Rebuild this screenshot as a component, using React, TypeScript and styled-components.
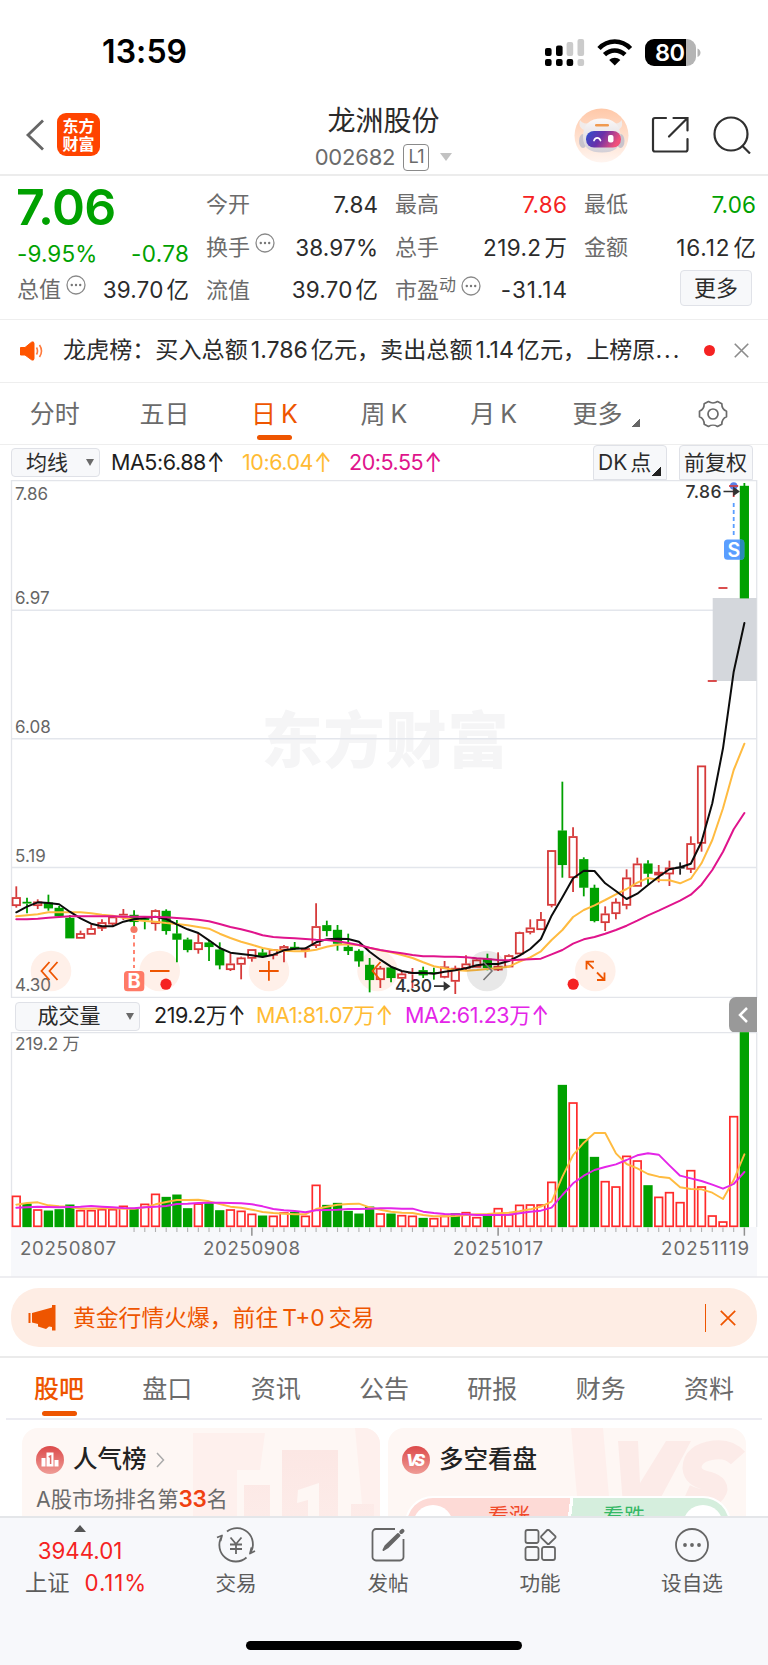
import React from 'react';
import styled, { createGlobalStyle } from 'styled-components';

const GlobalStyle = createGlobalStyle`
  * { box-sizing: border-box; }
  body {
    margin: 0;
    background: #fff;
    color: #2b2b2b;
    font-family: Inter, "Noto Sans CJK SC", sans-serif;
    line-height: 1.2;
    -webkit-font-smoothing: antialiased;
  }
`;

const ORANGE = '#ee5500';
const GREEN = '#00a100';
const RED = '#f52222';
const GREY = '#6b6b6b';

const Screen = styled.main`
  width: 768px;
  height: 1665px;
  display: flex;
  flex-direction: column;
  overflow: hidden;
  background: #fff;
`;

/* ---------- status bar ---------- */
const StatusBar = styled.div`
  height: 95px;
  padding: 10px 67px 0 102px;
  display: flex;
  align-items: center;
  justify-content: space-between;
`;
const Clock = styled.span`
  font-size: 32px;
  font-weight: 600;
  letter-spacing: 0.1px;
  color: #000;
`;
const StatusIcons = styled.svg`
  width: 156px;
  height: 28px;
  display: block;
`;

/* ---------- header ---------- */
const Header = styled.header`
  height: 81px;
  padding: 1px 17px 0 25px;
  display: grid;
  grid-template-columns: 220px 1fr 180px;
  border-bottom: 2px solid #ececec;
`;
const HeaderLeft = styled.div`
  display: flex;
  align-items: center;
  gap: 12px;
  padding-bottom: 1px;
`;
const Logo = styled.div`
  width: 43px;
  height: 43px;
  border-radius: 9px;
  background: #ff4400;
  color: #fff;
  font: 700 16px/18px "Noto Sans CJK SC", sans-serif;
  display: flex;
  align-items: center;
  justify-content: center;
  text-align: center;
  padding-bottom: 1px;
`;
const HeaderTitle = styled.div`
  display: flex;
  flex-direction: column;
  align-items: center;
  padding-top: 8px;
  margin-left: -49px;
`;
const StockName = styled.h1`
  margin: 0;
  font-size: 28px;
  line-height: 34px;
  font-weight: 400;
`;
const StockCode = styled.div`
  display: flex;
  align-items: center;
  gap: 8px;
  height: 28px;
  margin-top: 5px;
  font-size: 22px;
  color: ${GREY};
  letter-spacing: -0.2px;
`;
const Level = styled.span`
  width: 26px;
  height: 27px;
  border: 1.5px solid #8a8a8a;
  border-radius: 4px;
  font-size: 18px;
  line-height: 24px;
  text-align: center;
  letter-spacing: -0.5px;
`;
const Caret = styled.span`
  margin-left: 3px;
  border: 6.5px solid transparent;
  border-top: 8px solid #c2c2c2;
  border-bottom: 0;
`;
const HeaderRight = styled.div`
  display: flex;
  align-items: center;
  justify-content: flex-end;
  gap: 22px;
  svg:last-child { margin-left: 2px; }
`;

/* ---------- quote ---------- */
const Quote = styled.section`
  height: 144px;
  padding: 7px 12px 0 17px;
  display: grid;
  grid-template-columns: 172px 172px 172px 172px;
  column-gap: 17px;
  border-bottom: 1px solid #eeeeee;
`;
const QuoteColumn = styled.div`
  display: flex;
  flex-direction: column;
`;
const QuoteRow = styled.div<{ $tone?: string; $h?: number }>`
  height: ${(p) => p.$h ?? 42.7}px;
  display: flex;
  align-items: center;
  justify-content: space-between;
  font-size: 22.5px;
  letter-spacing: 0.1px;
  white-space: nowrap;
  color: ${(p) => p.$tone ?? '#2b2b2b'};
`;
const Figure = styled.span<{ $track: number }>`
  letter-spacing: ${(p) => p.$track}px;
  margin-right: ${(p) => -p.$track}px;
`;
const Price = styled.div`
  height: 50px;
  margin-left: -1px;
  font-size: 50px;
  line-height: 49px;
  font-weight: 600;
  letter-spacing: -0.6px;
  color: ${GREEN};
`;
const Label = styled.span`
  display: flex;
  font-size: 22px;
  letter-spacing: 0;
  color: ${GREY};
`;
const Sup = styled.sup`
  font-size: 17px;
  line-height: 16px;
`;
const Unit = styled.span`
  margin: 0 0 0 3px;
`;
const MoreButton = styled.button`
  width: 72px;
  height: 36px;
  margin: 2px 4px 0 auto;
  padding: 0;
  border: 1.5px solid #e0e2e8;
  border-radius: 4px;
  background: #f7f8fa;
  font: 22px/30px Inter, "Noto Sans CJK SC", sans-serif;
  color: #2b2b2b;
`;

/* ---------- news ticker ---------- */
const News = styled.section`
  height: 63px;
  padding: 0 19px 1px 19px;
  display: flex;
  align-items: center;
  font-size: 23.1px;
  border-bottom: 1px solid #eeeeee;
  svg { flex: none; }
`;
const NewsText = styled.div`
  flex: 1;
  margin-left: 19px;
  white-space: nowrap;
`;
const Num = styled.span<{ $gap?: number; $ls?: number }>`
  margin: 0 ${(p) => p.$gap ?? 3}px;
  letter-spacing: ${(p) => p.$ls ?? 0}px;
`;
const Ellipsis = styled.span`
  letter-spacing: 2px;
`;
const Dot = styled.i`
  flex: none;
  width: 11px;
  height: 11px;
  margin: 0 19px 0 10px;
  border-radius: 50%;
  background: ${RED};
`;

/* ---------- tabs ---------- */
const Tab = styled.a<{ $active?: boolean; $bold?: boolean; $shift?: number }>`
  position: relative;
  display: flex;
  align-items: center;
  justify-content: center;
  gap: 5px;
  padding-left: ${(p) => p.$shift ?? 0}px;
  font-size: 25px;
  font-weight: ${(p) => (p.$bold ? 500 : 400)};
  color: ${(p) => (p.$active ? ORANGE : GREY)};
  &::after {
    content: "";
    display: ${(p) => (p.$active ? 'block' : 'none')};
    position: absolute;
    left: calc(50% - 17.5px);
    bottom: 4px;
    width: 35px;
    height: 5px;
    border-radius: 3px;
    background: ${ORANGE};
  }
`;
const PeriodTabs = styled.nav`
  height: 62px;
  display: grid;
  grid-template-columns: repeat(7, 1fr);
  border-bottom: 1px solid #eeeeee;
`;
const SectionTabs = styled.nav`
  height: 62px;
  margin: 0 6px;
  padding: 2px 28px 0 28px;
  display: flex;
  justify-content: space-between;
  border-bottom: 2px solid #ececf2;
  ${Tab}::after { bottom: 2px; }
`;
const Corner = styled.i<{ $size: number; $tone: string; $ml?: number; $mt?: number }>`
  width: ${(p) => p.$size}px;
  height: ${(p) => p.$size}px;
  margin-left: ${(p) => p.$ml ?? 0}px;
  margin-top: ${(p) => p.$mt ?? 0}px;
  background: linear-gradient(135deg, transparent 50%, ${(p) => p.$tone} 50%);
`;

/* ---------- indicator bars ---------- */
const IndicatorBar = styled.div<{ $h: number; $pt?: number }>`
  height: ${(p) => p.$h}px;
  padding: ${(p) => p.$pt ?? 0}px 11px 0;
  display: flex;
  align-items: center;
`;
const Select = styled.div<{ $w: number; $ml?: number }>`
  width: ${(p) => p.$w}px;
  height: 29px;
  margin-left: ${(p) => p.$ml ?? 0}px;
  padding: 0 5px 0 0;
  display: flex;
  align-items: center;
  border: 1px solid #dfe1e7;
  border-radius: 4px;
  background: #f7f8fa;
  font-size: 21px;
  line-height: 26px;
  span { flex: 1; text-align: center; padding-right: 4px; }
`;
const SelectArrow = styled.i`
  border: 4.5px solid transparent;
  border-top: 7.5px solid #6a6a6a;
  border-bottom: 0;
`;
const Value = styled.span<{ $w: number; $ml: number; $tone?: string }>`
  width: ${(p) => p.$w}px;
  margin-left: ${(p) => p.$ml}px;
  font-size: 21.5px;
  letter-spacing: -0.45px;
  white-space: nowrap;
  color: ${(p) => p.$tone ?? '#1e1e1e'};
`;
const Up = styled.span`
  display: inline-block;
  margin-left: 1px;
  transform: scaleY(1.25);
`;
const ChipGroup = styled.div`
  margin-left: auto;
  margin-right: 4px;
  display: flex;
  gap: 12px;
`;
const Chip = styled.div`
  width: 74px;
  height: 35px;
  padding-left: 4px;
  display: flex;
  align-items: center;
  border: 1px solid #dfe1e7;
  border-radius: 4px 4px 0 0;
  background: #f7f8fa;
  font-size: 21px;
  white-space: nowrap;
  & > i { align-self: flex-end; margin-bottom: 3px; }
`;
const Collapse = styled.div`
  width: 28px;
  height: 36px;
  margin-left: auto;
  margin-top: -2px;
  border-radius: 7px 0 0 7px;
  background: #999;
  display: flex;
  align-items: center;
  justify-content: center;
`;
const ChartSvg = styled.svg`
  display: block;
  flex: none;
`;

/* ---------- banner ---------- */
const BannerArea = styled.section`
  height: 80px;
  padding: 10px 11px 0;
  border-bottom: 2px solid #ebebeb;
`;
const Banner = styled.div`
  height: 59px;
  padding: 0 21px 0 17px;
  display: flex;
  align-items: center;
  border-radius: 28px;
  background: #feede4;
  color: ${ORANGE};
  font-size: 22.8px;
`;
const BannerText = styled.span`
  flex: 1;
  margin-left: 16px;
`;
const Divider = styled.i`
  width: 1.5px;
  height: 28px;
  margin-right: 14px;
  background: ${ORANGE};
`;

/* ---------- cards ---------- */
const Cards = styled.section`
  height: 96px;
  padding: 8px 22px 0;
  display: flex;
  gap: 8px;
  overflow: hidden;
`;
const Card = styled.article`
  position: relative;
  width: 358px;
  height: 130px;
  padding: 18px 14px;
  border-radius: 16px;
  background: #fef7f4;
  overflow: hidden;
`;
const CardArt = styled.svg`
  position: absolute;
  inset: 0;
`;
const CardTitle = styled.h2`
  position: relative;
  margin: 0;
  height: 28px;
  display: flex;
  align-items: center;
  gap: 9px;
  font-size: 24.5px;
  font-weight: 500;
  color: #222;
`;
const CardText = styled.p`
  position: relative;
  margin: 12px 0 0;
  font-size: 21.3px;
  line-height: 26px;
  color: ${GREY};
  b { color: #f04010; font-weight: 600; font-size: 22.5px; letter-spacing: -0.3px; }
`;
const Vote = styled.div`
  position: relative;
  margin: 22px 1px 0 3px;
  height: 56px;
  display: flex;
  border: 2px solid #fff;
  border-radius: 28px;
  overflow: hidden;
  background: linear-gradient(97deg, #fddad6 0 49.7%, #fff 49.7% 50.7%, #d5eedd 50.7%);
`;
const VoteSide = styled.span<{ $tone: string; $right?: boolean }>`
  flex: 1;
  display: flex;
  flex-direction: ${(p) => (p.$right ? 'row-reverse' : 'row')};
  gap: ${(p) => (p.$right ? 38 : 35)}px;
  padding: 5px 6px 0;
  font-size: 21px;
  line-height: 26px;
  color: ${(p) => p.$tone};
  &::before {
    content: "";
    width: 40px;
    height: 40px;
    margin-top: 2px;
    border-radius: 50%;
    background: #fff;
  }
`;

/* ---------- bottom navigation ---------- */
const BottomNav = styled.footer`
  flex: 1;
  border-top: 2px solid #e4e6e9;
  background: #f7f8fb;
  display: flex;
  flex-direction: column;
  align-items: center;
`;
const NavRow = styled.div`
  width: 100%;
  height: 123px;
  padding-left: 8px;
  display: flex;
`;
const NavItem = styled.div`
  width: 152px;
  padding-top: 7px;
  display: flex;
  flex-direction: column;
  align-items: center;
  font-size: 20.6px;
  line-height: 30px;
  color: #5c5c5c;
  svg { margin-bottom: 4px; }
`;
const IndexItem = styled(NavItem)`
  width: 144px;
  margin-right: 8px;
  font-size: 22.3px;
`;
const IndexLine = styled.span<{ $tone?: string; $ml?: number }>`
  display: flex;
  gap: 15px;
  height: 32px;
  margin-left: ${(p) => p.$ml ?? 0}px;
  color: ${(p) => p.$tone ?? '#5c5c5c'};
  em { font-style: normal; color: ${RED}; letter-spacing: 0.9px; }
`;
const HomeBar = styled.div`
  width: 276px;
  height: 9px;
  border-radius: 5px;
  background: #000;
`;

/* ---------- chart data ---------- */
const STEP = 10.707;
const xAt = (i: number) => 16.3 + STEP * i;

// kind, high, body top, body bottom, low (thirds of a pixel below y = 860)
type Candle = [string, number, number, number, number];
const candles: Candle[] = [
  ['r', 79, 112, 137, 143], ['g', 113, 128, 131, 160], ['r', 118, 125, 137, 147], ['g', 104, 128, 144, 152],
  ['g', 138, 144, 168, 173], ['g', 165, 174, 234, 234], ['r', 212, 220, 235, 235], ['r', 193, 205, 223, 223],
  ['r', 178, 187, 205, 213], ['r', 170, 170, 192, 200], ['r', 147, 164, 168, 180], ['g', 151, 165, 185, 208],
  ['g', 170, 178, 182, 208], ['r', 148, 151, 191, 212], ['g', 148, 153, 212, 224], ['g', 180, 221, 238, 307],
  ['g', 233, 239, 269, 277], ['r', 219, 247, 269, 281], ['g', 243, 248, 260, 303], ['g', 247, 269, 315, 328],
  ['r', 280, 311, 329, 333], ['r', 290, 293, 313, 358], ['r', 268, 268, 295, 305], ['g', 265, 278, 288, 293],
  ['r', 267, 268, 286, 298], ['r', 255, 259, 270, 307], ['g', 246, 261, 266, 270], ['r', 262, 265, 272, 293],
  ['r', 130, 199, 257, 264], ['g', 182, 196, 212, 229], ['g', 195, 210, 250, 272], ['g', 221, 261, 272, 285],
  ['g', 268, 273, 303, 320], ['g', 294, 315, 359, 397], ['r', 318, 324, 359, 384], ['g', 320, 323, 353, 367],
  ['r', 333, 341, 355, 358], ['r', 324, 339, 343, 384], ['g', 320, 331, 345, 354], ['g', 323, 339, 341, 359],
  ['r', 303, 320, 352, 355], ['r', 317, 324, 364, 402], ['r', 286, 311, 325, 330], ['r', 295, 299, 322, 322],
  ['g', 281, 297, 323, 331], ['r', 277, 318, 330, 333], ['r', 283, 286, 321, 321], ['r', 215, 217, 282, 282],
  ['r', 178, 203, 217, 223], ['r', 156, 178, 209, 209], ['r', -30, -29, 136, 142], ['g', -235, -88, 14, 53],
  ['r', -98, -71, 53, 96], ['g', -8, -2, 82, 109], ['g', 74, 84, 182, 187], ['r', 139, 161, 188, 213],
  ['r', 115, 126, 161, 178], ['r', 28, 53, 136, 148], ['r', -7, 11, 79, 79], ['g', 1, 11, 40, 72],
  ['r', 15, 36, 45, 67], ['r', 2, 23, 42, 78], ['k', 7, 23, 26, 44], ['r', -71, -50, 28, 39],
  ['r', -283, -283, -50, -25], ['r', -537, -537, -537, -537], ['r', -816, -816, -816, -816],
  ['r', -1122, -1122, -1122, -1089], ['g', -1131, -1122, -786, -786],
];
const ma5 = [157, 140, 127, 129, 133, 155, 175, 191, 199, 199, 185, 178, 174, 170, 177, 193, 208, 219, 241, 264, 278, 282, 286, 291, 284, 271, 266, 265, 247, 238, 236, 237, 245, 275, 299, 320, 333, 339, 338, 341, 335, 331, 325, 316, 312, 312, 303, 287, 267, 237, 167, 112, 55, 32, 33, 70, 93, 117, 101, 75, 50, 28, 22, 11, -55, -170, -335, -565, -711];
const ma10 = [169, 166, 163, 157, 157, 157, 157, 160, 164, 167, 173, 179, 183, 185, 189, 192, 196, 201, 206, 221, 234, 245, 254, 264, 270, 272, 274, 274, 269, 260, 254, 253, 256, 264, 271, 277, 285, 294, 307, 319, 325, 330, 332, 330, 327, 324, 320, 305, 292, 274, 240, 210, 171, 150, 136, 120, 103, 87, 68, 54, 60, 61, 70, 56, 10, -60, -155, -270, -349];
const ma20 = [178, 178, 176, 173, 171, 169, 169, 169, 169, 169, 170, 170, 170, 171, 172, 174, 176, 179, 184, 192, 201, 208, 216, 226, 231, 233, 235, 237, 239, 240, 244, 249, 255, 263, 270, 275, 280, 285, 289, 289, 290, 290, 292, 295, 297, 300, 301, 299, 298, 296, 283, 270, 251, 238, 231, 221, 210, 197, 182, 166, 152, 137, 122, 104, 74, 30, -25, -92, -141];

// bar tops and averages (thirds of a pixel below y = 1000)
const volume = [587, 611, 628, 632, 628, 614, 630, 630, 627, 627, 617, 626, 611, 581, 591, 584, 625, 610, 608, 631, 628, 632, 641, 647, 647, 637, 636, 647, 554, 615, 609, 633, 641, 620, 640, 641, 645, 647, 654, 654, 647, 640, 636, 651, 647, 624, 642, 614, 613, 613, 545, 255, 307, 417, 471, 543, 559, 467, 481, 556, 590, 576, 606, 510, 559, 646, 664, 348, 97];
const greenBars = new Set([1, 3, 4, 5, 11, 14, 15, 16, 18, 19, 23, 26, 29, 30, 31, 32, 33, 35, 38, 41, 44, 51, 53, 54, 59, 68]);
const vma1 = [614, 609, 607, 616, 619, 621, 626, 626, 625, 625, 626, 626, 622, 613, 606, 600, 600, 599, 604, 612, 620, 623, 629, 636, 639, 641, 643, 643, 627, 620, 614, 612, 611, 622, 629, 635, 638, 639, 645, 649, 649, 648, 645, 643, 642, 640, 638, 634, 628, 620, 605, 530, 465, 428, 399, 399, 460, 492, 505, 522, 530, 534, 562, 567, 568, 578, 597, 540, 463];
const vma2 = [623, 622, 620, 621, 622, 621, 620, 618, 620, 622, 624, 625, 622, 620, 618, 612, 611, 609, 608, 608, 609, 610, 613, 619, 627, 631, 633, 637, 631, 630, 629, 627, 627, 626, 625, 625, 626, 626, 635, 639, 642, 643, 643, 645, 645, 645, 644, 640, 635, 632, 623, 585, 550, 527, 510, 501, 493, 480, 466, 460, 464, 496, 527, 535, 543, 554, 566, 552, 516];

const linePoints = (values: number[], base: number) =>
  values.map((v, i) => `${xAt(i).toFixed(1)},${(base + v / 3).toFixed(1)}`).join(' ');

const CandleShape = ({ data, index }: { data: Candle; index: number }) => {
  const [kind, high, top, bottom, low] = data;
  const color = kind === 'g' ? GREEN : kind === 'r' ? '#d63a3a' : '#222';
  const x = xAt(index);
  const [yh, yt, yb, yl] = [high, top, bottom, low].map((v) => 860 + v / 3);
  const flat = yb - yt < 1.5;
  return (
    <g stroke={color} strokeWidth={1.8} fill={kind === 'r' ? 'none' : color}>
      {yh < yt && <line x1={x} x2={x} y1={yh} y2={yt} />}
      {yl > yb && <line x1={x} x2={x} y1={yb} y2={yl} />}
      {flat ? (
        <line x1={x - 4.5} x2={x + 4.5} y1={yt} y2={yt} />
      ) : (
        <rect x={x - 3.7} y={yt + 0.7} width={7.4} height={Math.max(yb - yt - 1.2, 0.4)} />
      )}
    </g>
  );
};

const gridLabels: [string, number][] = [['7.86', 494], ['6.97', 598], ['6.08', 727], ['5.19', 856], ['4.30', 985]];

const PriceChart = () => (
  <ChartSvg width="768" height="518" viewBox="0 480 768 518">
    <text x="385" y="763" textAnchor="middle" fontSize="61" fontWeight="900" fill="#f5f5f6" textLength="247">东方财富</text>
    <path d="M11 610.2H757M11 738.8H757M11 867.4H757" stroke="#e3e6ec" strokeWidth="1.5" />
    <path d="M11.5 997.3V480.7H756.7V997.3Z" fill="none" stroke="#e3e5ea" strokeWidth="1.3" />
    <rect x="712.7" y="598" width="44" height="83" fill="#d4d7dc" />
    {[51, 159.7, 269, 377.6, 595.3].map((x) => (
      <circle key={x} cx={x} cy="971" r="20.3" fill="#fff0e9" />
    ))}
    <g fontSize="17" fill="#666">
      {gridLabels.map(([label, y]) => <text key={label} x="15" y={y + 6.2}>{label}</text>)}
    </g>
    {candles.map((c, i) => <CandleShape key={i} data={c} index={i} />)}
    <g fill="none" strokeWidth="2" strokeLinejoin="round" strokeLinecap="round">
      <polyline points={linePoints(ma10, 860)} stroke="#ffbb40" />
      <polyline points={linePoints(ma5, 860)} stroke="#0c0c0c" />
      <polyline points={linePoints(ma20, 860)} stroke="#e0148c" />
    </g>
    <circle cx="487" cy="971" r="20.3" fill="#000" fillOpacity=".09" />
    <g fill="none" stroke={ORANGE} strokeWidth="1.8">
      <path d="M49.500 962L41.500 971L49.500 980M57.500 962L49.500 971L57.500 980" />
      <path d="M150 971H169.500M259 971H278.700M268.900 961V980.700M380.500 962L372.500 971L380.500 980" />
      <path d="M594 961.700H586.500V969.500M586.500 961.700L593.500 968.700M604.500 972.500V980H597M604.500 980L597 972.500" />
    </g>
    <path d="M483.500 962L492 971L483.500 980" fill="none" stroke="#777" strokeWidth="1.6" />
    <circle cx="166" cy="984.200" r="5.6" fill={RED} />
    <circle cx="573.200" cy="984.200" r="5.6" fill={RED} />
    <path d="M134 935V968" stroke="#ff7864" strokeWidth="1.8" strokeDasharray="4 3.500" />
    <circle cx="134" cy="929.500" r="3.6" fill="#f57864" />
    <rect x="124" y="971" width="20.300" height="20.300" rx="3.500" fill="#ff7a66" />
    <text x="134.200" y="988.300" textAnchor="middle" fontSize="20" fontWeight="700" fill="#fff">B</text>
    <path d="M733.700 503V537" stroke="#5a9eff" strokeWidth="1.8" strokeDasharray="4 3" />
    <circle cx="733.700" cy="486" r="3.8" fill="#5a7fe8" />
    <path d="M729.500 486H738" stroke="#d63a3a" strokeWidth="1.6" />
    <rect x="724" y="539.500" width="20.300" height="20.300" rx="3.500" fill="#5a9eff" />
    <path d="M740 539.500h1a3.300 3.300 0 0 1 3.300 3.300v13.700a3.300 3.300 0 0 1 -3.300 3.300h-1z" fill="#2a8ab8" />
    <text x="733.800" y="556.700" textAnchor="middle" fontSize="19.500" fontWeight="600" fill="#fff">S</text>
    <g fontSize="17.500" fontWeight="500" fill="#333">
      <text x="395" y="992.400" textLength="37">4.30</text>
      <text x="685.500" y="498" textLength="36">7.86</text>
    </g>
    <g fill="#333" stroke="#333" strokeWidth="1.7">
      <path d="M434 986.200H448M444.500 983L449 986.200L444.500 989.400Z" />
      <path d="M723.500 491.500H737.500M734 488.300L738.500 491.500L734 494.700Z" />
    </g>
  </ChartSvg>
);

const dates: [string, number, number][] = [['20250807', 20, 96], ['20250908', 203, 97], ['20251017', 453, 90], ['20251119', 661, 88]];

const VolumeChart = () => (
  <ChartSvg width="768" height="246" viewBox="0 1032 768 246">
    <rect x="11" y="1227" width="746" height="50" fill="#f7f8fb" />
    <path d="M11.500 1227V1032.700H756.700V1227" fill="none" stroke="#e3e5ea" strokeWidth="1.300" />
    <path d="M0 1277H768" stroke="#e8e9ec" strokeWidth="1.500" />
    <text x="15" y="1050.300" fontSize="17.300" fill="#666">219.2<tspan dx="4">万</tspan></text>
    {volume.map((v, i) => {
      const top = 1000 + v / 3;
      const green = greenBars.has(i);
      return (
        <rect
          key={i}
          x={xAt(i) - 3.8}
          y={top + 0.7}
          width={7.6}
          height={Math.max(1226.3 - top - 0.7, 1)}
          fill={green ? GREEN : '#fff'}
          stroke={green ? GREEN : '#ff2b2b'}
          strokeWidth="1.700"
        />
      );
    })}
    <g fill="none" strokeWidth="1.900" strokeLinejoin="round" strokeLinecap="round">
      <polyline points={linePoints(vma1, 1000)} stroke="#ffbb40" />
      <polyline points={linePoints(vma2, 1000)} stroke="#e425e8" />
    </g>
    {Array.from({ length: 58 }, (_, k) => k + 11).map((i) => {
      const major = i === 22 || i === 45 || i === 68;
      return (
        <line key={i} x1={xAt(i)} x2={xAt(i)} y1="1227.500" y2={major ? 1235.7 : 1232} stroke={major ? '#909090' : '#b0b0b0'} strokeWidth={major ? 1.5 : 1.1} />
      );
    })}
    <g fontSize="18.700" fill="#6b6b6b">
      {dates.map(([d, x, w]) => <text key={d} x={x} y="1255.300" textLength={w}>{d}</text>)}
    </g>
  </ChartSvg>
);

/* ---------- small icons ---------- */
const DotsSvg = styled.svg`
  margin: -1px 0 0 5px;
`;
const MoreDots = () => (
  <DotsSvg width="20" height="20" viewBox="0 0 20 20">
    <circle cx="10" cy="10" r="9" fill="none" stroke="#8a8a8a" strokeWidth="1.300" />
    <g fill="#777"><circle cx="5.800" cy="10" r="1.200" /><circle cx="10" cy="10" r="1.200" /><circle cx="14.200" cy="10" r="1.200" /></g>
  </DotsSvg>
);

const Cross = ({ size, color }: { size: number; color: string }) => (
  <svg width={size} height={size} viewBox="0 0 14 14">
    <path d="M0.700 0.700L13.300 13.300M13.300 0.700L0.700 13.300" stroke={color} strokeWidth="1.500" />
  </svg>
);

const Robot = () => (
  <svg width="55" height="55" viewBox="0 0 55 55">
    <defs>
      <linearGradient id="halo" x1="0" y1="0" x2="0" y2="1"><stop offset="0" stopColor="#ffc8a8" /><stop offset="1" stopColor="#fff5f0" /></linearGradient>
      <linearGradient id="visor" x1="0" y1="0" x2="1" y2=".3"><stop offset="0" stopColor="#2b4fd0" /><stop offset=".5" stopColor="#6a2fa8" /><stop offset="1" stopColor="#f0507a" /></linearGradient>
      <linearGradient id="shell" x1="0" y1="0" x2="0" y2="1"><stop offset="0" stopColor="#fbf8f8" /><stop offset="1" stopColor="#d3cfd6" /></linearGradient>
    </defs>
    <circle cx="27.500" cy="27.500" r="27" fill="url(#halo)" />
    <path d="M6 12C4.500 17 6 20 10 22L15 15C11 16 8 15 6 12ZM47.500 12C49 17 48 20 44 22L39 15C43 16 46 15 47.500 12Z" fill="#f1ebea" />
    <ellipse cx="9" cy="33" rx="4" ry="7" fill="#c8c4cc" /><ellipse cx="46.500" cy="33" rx="4" ry="7" fill="#c8c4cc" />
    <path d="M9 29C9 16 16 10.500 27.500 10.500S46.500 16 46.500 29C46.500 40 40 44.500 28 44.500S9 40 9 29Z" fill="url(#shell)" />
    <rect x="12" y="23" width="35" height="16.500" rx="8" fill="url(#visor)" />
    <rect x="21" y="16" width="14" height="2.600" rx="1.300" fill="#f09a50" />
    <path d="M20 32.500C21.500 29 25 29 26.500 32.500" fill="none" stroke="#fff" strokeWidth="1.700" strokeLinecap="round" />
    <rect x="34" y="27" width="5.500" height="7.500" rx="2" fill="#fff" />
  </svg>
);

const StatusGlyphs = () => (
  <StatusIcons viewBox="545 38 156 28">
    <g fill="#000">
      <rect x="545" y="47" width="6.600" height="8" rx="2" /><rect x="556" y="44.500" width="6.600" height="10.500" rx="2" />
      <rect x="545" y="58" width="6.600" height="7" rx="2" /><rect x="556" y="58" width="6.600" height="7" rx="2" /><rect x="566.600" y="58" width="6.600" height="7" rx="2" />
    </g>
    <g fill="#cbcbcb">
      <rect x="566.600" y="41" width="6.600" height="14" rx="2" /><rect x="577.500" y="38" width="6.600" height="17" rx="2" /><rect x="577.500" y="58" width="6.600" height="7" rx="2" />
    </g>
    <g fill="none" stroke="#000" strokeWidth="4.600">
      <path d="M599 47.500C608 38.200 621.500 38.200 630.500 47.500" /><path d="M604.500 53.700C610.500 48 619 48 625 53.700" />
    </g>
    <path d="M609.200 59C612.500 56 617 56 620.300 59L614.750 64.500Z" fill="#000" />
    <path d="M654 38H686V65H654A9 9 0 0 1 645 56V47A9 9 0 0 1 654 38Z" fill="#000" />
    <path d="M686 38H687A9 9 0 0 1 696 47V56A9 9 0 0 1 687 65H686Z" fill="#b4b4b4" />
    <path d="M697.500 47.500C701.500 49 701.500 54.500 697.500 56Z" fill="#b4b4b4" />
    <text x="670" y="59.700" textAnchor="middle" fontSize="23.500" fontWeight="600" fill="#fff" textLength="30">80</text>
  </StatusIcons>
);

const GearIcon = () => (
  <svg width="30" height="28" viewBox="-15 -14 30 28" fill="none" stroke={GREY} strokeWidth="1.700" strokeLinejoin="round">
    <path d="M-4.500 -12.500C-2 -10.800 2 -10.800 4.500 -12.500L8.800 -10.200C8.800 -6.800 10.500 -4 13.500 -2.700V2.700C10.500 4 8.800 6.800 8.800 10.200L4.500 12.500C2 10.800 -2 10.800 -4.500 12.500L-8.800 10.200C-8.800 6.800 -10.500 4 -13.500 2.700V-2.700C-10.500 -4 -8.800 -6.800 -8.800 -10.200Z" />
    <circle r="5" />
  </svg>
);

const navStroke = { fill: 'none', stroke: '#666', strokeWidth: 1.8, strokeLinejoin: 'round' as const };

const TradeIcon = () => (
  <svg width="42" height="40" viewBox="-21 -20 42 40" {...navStroke}>
    <path d="M-9 -13.500A16 16 0 0 1 14.500 7.500M10.500 12.500A16.400 16.400 0 0 1 -14.500 -8M-19 -7.500L-14 -9.500L-15.500 -4M19 6L14 8.500L15.500 2.500" />
    <path d="M-5.500 -7.500L0 -1L5.500 -7.500M-6 -0.500H6M-6 4H6M0 -1V9" />
  </svg>
);
const PostIcon = () => (
  <svg width="42" height="40" viewBox="-21 -20 42 40" {...navStroke}>
    <path d="M7 -16H-12A3.500 3.500 0 0 0 -15.500 -12.500V12A3.500 3.500 0 0 0 -12 15.500H12A3.500 3.500 0 0 0 15.500 12V-6" />
    <path d="M-4.500 5L-2.500 1L10 -11L11.500 -9.500L-0.500 2.500Z" strokeWidth="2" fill="#666" />
    <path d="M13.300 -13L14.500 -14.200" strokeWidth="4" strokeLinecap="round" />
  </svg>
);
const GridIcon = () => (
  <svg width="42" height="40" viewBox="-21 -20 42 40" {...navStroke}>
    <rect x="-14.500" y="-15" width="13" height="13" rx="2" /><rect x="-14.500" y="2" width="13" height="13" rx="2" /><rect x="2" y="2" width="13" height="13" rx="2" />
    <path d="M7.300 -15L8.900 -15L15.500 -8.600V-7.400L8.900 -1H7.700L1.100 -7.400V-8.600Z" />
  </svg>
);
const EllipsisIcon = () => (
  <svg width="42" height="40" viewBox="-21 -20 42 40" {...navStroke}>
    <circle r="16" />
    <g fill="#666" stroke="none"><circle cx="-7" r="1.900" /><circle r="1.900" /><circle cx="7" r="1.900" /></g>
  </svg>
);

const Badge = ({ vs }: { vs?: boolean }) => (
  <svg width="28" height="28" viewBox="0 0 28 28">
    <defs><linearGradient id="badge" x1="0" y1="0" x2="0" y2="1"><stop offset="0" stopColor="#dc4a4a" /><stop offset="1" stopColor="#ef9c96" /></linearGradient></defs>
    <circle cx="14" cy="14" r="14" fill="url(#badge)" />
    {vs ? (
      <text x="13.500" y="20" textAnchor="middle" fontSize="16" fontWeight="800" fontStyle="italic" fill="#fff" textLength="19">VS</text>
    ) : (
      <g>
        <path d="M5.500 12H9.500V20.500H5.500ZM10.500 6.500H17.500V20.500H10.500ZM18.500 14H22.500V20.500H18.500Z" fill="#fff" />
        <path d="M12.700 11L14.600 10V18" stroke="#e06a66" strokeWidth="1.500" fill="none" />
      </g>
    )}
  </svg>
);

type Cell = { label: string; value: string; unit?: string; tone?: string; dots?: boolean; sup?: string; track?: number };
const quoteColumns: Cell[][] = [
  [
    { label: '今开', value: '7.84' },
    { label: '换手', value: '38.97%', dots: true },
    { label: '流值', value: '39.70', unit: '亿' },
  ],
  [
    { label: '最高', value: '7.86', tone: RED, track: 0.35 },
    { label: '总手', value: '219.2', unit: '万', track: 0.4 },
    { label: '市盈', value: '-31.14', dots: true, sup: '动', track: 0.95 },
  ],
  [
    { label: '最低', value: '7.06', tone: GREEN },
    { label: '金额', value: '16.12', unit: '亿', track: 0.9 },
  ],
];

const QuoteCell = ({ cell }: { cell: Cell }) => (
  <QuoteRow $tone={cell.tone}>
    <Label>{cell.label}{cell.sup && <Sup>{cell.sup}</Sup>}{cell.dots && <MoreDots />}</Label>
    <Figure $track={cell.track ?? 0.15}>{cell.value}{cell.unit && <Unit>{cell.unit}</Unit>}</Figure>
  </QuoteRow>
);

export default function App() {
  return (
    <Screen>
      <GlobalStyle />
      <StatusBar>
        <Clock>13:59</Clock>
        <StatusGlyphs />
      </StatusBar>

      <Header>
        <HeaderLeft>
          <svg width="20" height="32" viewBox="0 0 20 32"><path d="M18 1.500L3 16L18 30.500" fill="none" stroke="#666" strokeWidth="2.800" /></svg>
          <Logo>东方<br />财富</Logo>
        </HeaderLeft>
        <HeaderTitle>
          <StockName>龙洲股份</StockName>
          <StockCode>002682<Level>L1</Level><Caret /></StockCode>
        </HeaderTitle>
        <HeaderRight>
          <Robot />
          <svg width="38" height="38" viewBox="0 0 38 38" fill="none" stroke="#303030" strokeWidth="2.200">
            <path d="M15 2H4A2 2 0 0 0 2 4V33.500A2 2 0 0 0 4 35.500H34.500A2 2 0 0 0 36.500 33.500V23M22.500 2H36.500V14.500M36 2.500L18 20.500" strokeLinecap="round" />
          </svg>
          <svg width="38" height="38" viewBox="0 0 38 38" fill="none" stroke="#303030" strokeWidth="2.200">
            <circle cx="18" cy="18" r="16.500" /><path d="M29 29.500L37 37.500" />
          </svg>
        </HeaderRight>
      </Header>

      <Quote>
        <QuoteColumn>
          <Price>7.06</Price>
          <QuoteRow $h={41} $tone={GREEN}><span>-9.95%</span><Figure $track={0.4}>-0.78</Figure></QuoteRow>
          <QuoteRow $h={30}><Label>总值<MoreDots /></Label><Figure $track={0.15}>39.70<Unit>亿</Unit></Figure></QuoteRow>
        </QuoteColumn>
        {quoteColumns.map((column, i) => (
          <QuoteColumn key={i}>
            {column.map((cell) => <QuoteCell key={cell.label} cell={cell} />)}
            {i === 2 && <MoreButton>更多</MoreButton>}
          </QuoteColumn>
        ))}
      </Quote>

      <News>
        <svg width="25" height="20" viewBox="0 0 25 20">
          <path d="M1.500 6.500H6L12.500 1.200Q15 0 15 2.500V17.500Q15 20 12.500 18.800L6 14H1.500Z" fill="#ff5500" stroke="#ff5500" strokeLinejoin="round" />
          <path d="M17.500 6.500Q19.500 10 17.500 13.500M20.500 4Q24.500 10 20.500 16" fill="none" stroke="#ff7a3c" strokeWidth="1.600" />
        </svg>
        <NewsText>龙虎榜：买入总额<Num>1.786</Num>亿元，卖出总额<Num>1.14</Num>亿元，上榜原<Ellipsis>...</Ellipsis></NewsText>
        <Dot />
        <Cross size={15} color="#8c8c8c" />
      </News>

      <PeriodTabs>
        <Tab>分时</Tab>
        <Tab>五日</Tab>
        <Tab $active>日<span>K</span></Tab>
        <Tab>周<span>K</span></Tab>
        <Tab>月<span>K</span></Tab>
        <Tab $shift={6}>更多<Corner $size={8} $tone="#666" $ml={5} $mt={18} /></Tab>
        <Tab><GearIcon /></Tab>
      </PeriodTabs>

      <IndicatorBar $h={35}>
        <Select $w={89}><span>均线</span><SelectArrow /></Select>
        <Value $ml={11} $w={131}>MA5:6.88<Up>↑</Up></Value>
        <Value $ml={0} $w={107} $tone="#ffbb33">10:6.04<Up>↑</Up></Value>
        <Value $ml={0} $w={110} $tone="#e0148c">20:5.55<Up>↑</Up></Value>
        <ChipGroup>
          <Chip>DK<Unit>点</Unit><Corner $size={10} $tone="#222" /></Chip>
          <Chip>前复权</Chip>
        </ChipGroup>
      </IndicatorBar>
      <PriceChart />

      <IndicatorBar $h={34} $pt={2}>
        <Select $w={125} $ml={4}><span>成交量</span><SelectArrow /></Select>
        <Value $ml={14} $w={102}>219.2万<Up>↑</Up></Value>
        <Value $ml={0} $w={149} $tone="#ffbb33">MA1:81.07万<Up>↑</Up></Value>
        <Value $ml={0} $w={150} $tone="#e425e8">MA2:61.23万<Up>↑</Up></Value>
        <Collapse>
          <svg width="12" height="18" viewBox="0 0 12 18"><path d="M10 2L3 9L10 16" fill="none" stroke="#fff" strokeWidth="2.500" /></svg>
        </Collapse>
      </IndicatorBar>
      <VolumeChart />

      <BannerArea>
        <Banner>
          <svg width="29" height="26" viewBox="0 0 29 26" fill={ORANGE}>
            <path d="M0.500 8H2.500V18H0.500ZM4 8L24 2.500V0H27.500V25.500H24V22L21 21.500L18 24L10 21.500V19L4 17.500Z" />
          </svg>
          <BannerText>黄金行情火爆，前往<Num $gap={4}>T+0</Num>交易</BannerText>
          <Divider />
          <Cross size={16} color={ORANGE} />
        </Banner>
      </BannerArea>

      <SectionTabs>
        {['股吧', '盘口', '资讯', '公告', '研报', '财务', '资料'].map((name, i) => (
          <Tab key={name} $active={i === 0} $bold={i === 0}>{name}</Tab>
        ))}
      </SectionTabs>

      <Cards>
        <Card>
          <CardArt width="358" height="130" viewBox="0 0 358 130">
            <defs><linearGradient id="art" x1="0" y1="0" x2="0" y2="1"><stop offset="0" stopColor="#fce7e4" /><stop offset="1" stopColor="#fdeeeb" /></linearGradient></defs>
            <path d="M171 5H243L238 42H215V130H171ZM333 0H358V130H345Z" fill="#fef0ed" />
            <path fillRule="evenodd" d="M260 22H316V130H260ZM276 62L297 55V130H286V72L275 75ZM222 57H248V130H222ZM329 76H352V130H329Z" fill="url(#art)" />
          </CardArt>
          <CardTitle>
            <Badge />人气榜
            <svg width="9" height="16" viewBox="0 0 9 16"><path d="M1 1L7.500 8L1 15" fill="none" stroke="#aaa" strokeWidth="1.500" /></svg>
          </CardTitle>
          <CardText>A股市场排名第<b>33</b>名</CardText>
        </Card>
        <Card>
          <CardArt width="358" height="130" viewBox="0 0 358 130">
            <path d="M183 0H215L222 80H190Z" fill="#feefec" />
            <path d="M230 13H250L252 55L278 13H303L262 90H236Z" fill="#fcebe8" />
            <path d="M350 30Q341 20 326 22Q304 25 304 40Q305 50 320 53Q334 57 328 65Q320 76 298 66" fill="none" stroke="#fcebe8" strokeWidth="19" />
          </CardArt>
          <CardTitle><Badge vs />多空看盘</CardTitle>
          <Vote>
            <VoteSide $tone="#f04a2a">看涨</VoteSide>
            <VoteSide $tone="#35b866" $right>看跌</VoteSide>
          </Vote>
        </Card>
      </Cards>

      <BottomNav>
        <NavRow>
          <IndexItem>
            <svg width="12" height="7" viewBox="0 0 12 7"><path d="M0 7L6 0L12 7Z" fill="#555" /></svg>
            <IndexLine $tone={RED}>3944.01</IndexLine>
            <IndexLine $ml={12}>上证<em>0.11%</em></IndexLine>
          </IndexItem>
          <NavItem><TradeIcon />交易</NavItem>
          <NavItem><PostIcon />发帖</NavItem>
          <NavItem><GridIcon />功能</NavItem>
          <NavItem><EllipsisIcon />设自选</NavItem>
        </NavRow>
        <HomeBar />
      </BottomNav>
    </Screen>
  );
}
